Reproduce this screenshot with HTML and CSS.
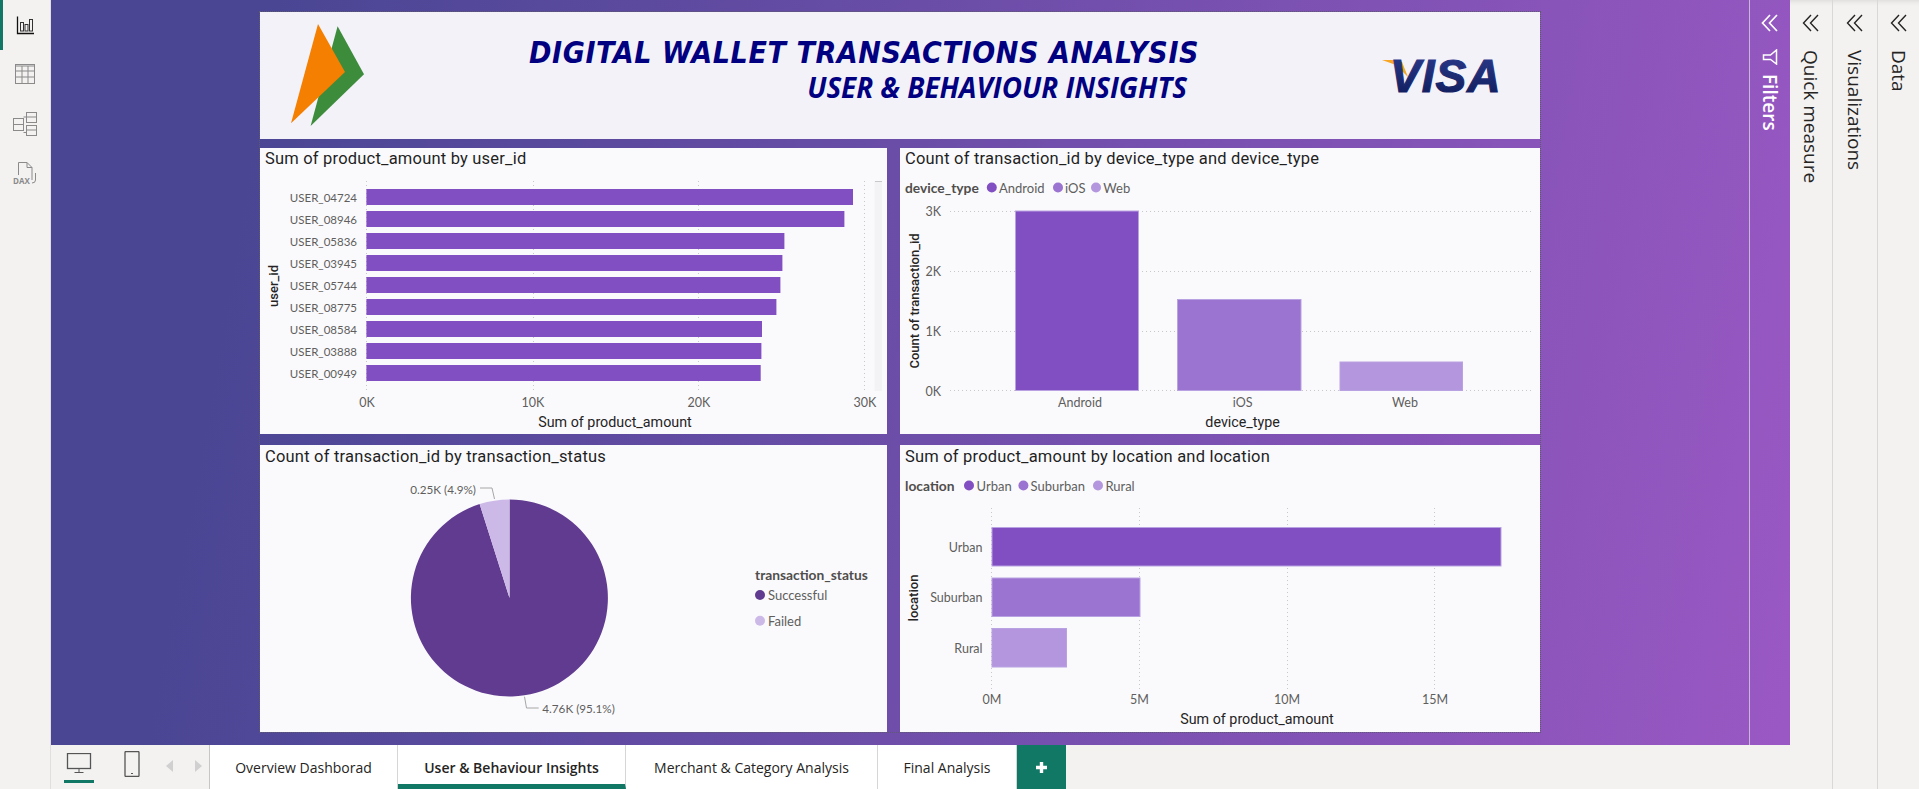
FILE: index.html
```html
<!DOCTYPE html>
<html lang="en">
<head>
    <meta charset="UTF-8">
    <title>Digital Wallet Transactions Analysis</title>
    <link rel="stylesheet" href="styles.css">
</head>
<body>
    <div class="app">
        <nav class="rail">
            <div class="railItem active">
                <svg width="24" height="24" viewBox="0 0 24 24" fill="none" stroke="#333"><path d="M4.500 3.500V20.500H21" stroke="#111" stroke-width="1.300"/><rect x="7.500" y="9.500" width="3" height="8.500"/><rect x="12" y="11.500" width="3" height="6.500"/><rect x="16.500" y="6.500" width="3" height="11.500"/></svg>
            </div>
            <div class="railItem">
                <svg width="24" height="24" viewBox="0 0 24 24" fill="none" stroke="#8a8a8a"><rect x="2.500" y="2.500" width="19" height="19"/><path d="M2.500 4H21.500M2.500 9H21.500M2.500 15H21.500M9 4V21.500M15 4V21.500"/></svg>
            </div>
            <div class="railItem">
                <svg width="24" height="24" viewBox="0 0 24 24" fill="none" stroke="#8a8a8a"><rect x="0.500" y="6.500" width="10" height="12"/><path d="M0.500 12.500H10.500"/><rect x="13.500" y="0.500" width="10" height="10"/><path d="M13.500 5H23.500"/><rect x="13.500" y="13.500" width="10" height="10"/><path d="M13.500 18H23.500M10.500 5H13.500M10.500 20.500H13.500"/></svg>
            </div>
            <div class="railItem">
                <svg width="24" height="24" viewBox="0 0 24 24" fill="none" stroke="#8a8a8a"><path d="M5.500 14V1.500H14L19 6.500V19"/><path d="M14 1.500V6.500H19"/><path d="M22.500 12V19Q22.500 22 19 22"/><text class="daxText" x="0" y="22.500">DAX</text></svg>
            </div>
        </nav>

        <main class="canvas">
            <div class="page">
                <header class="banner">
                    <svg class="logo" width="73" height="102" viewBox="0 0 73 102">
                        <polygon points="46.600,2.300 73,50.300 19.600,102" fill="#3c8c3c"/>
                        <polygon points="27,0 54,48 0,99.300" fill="#f57f00"/>
                    </svg>
                    <div class="bannerTitles">
                        <div class="titleMain">DIGITAL WALLET TRANSACTIONS ANALYSIS</div>
                        <div class="titleSub">USER &amp; BEHAVIOUR INSIGHTS</div>
                    </div>
                    <svg class="visa" width="124" height="38" viewBox="0 0 124 38">
                        <defs>
                            <linearGradient id="visaFill" x1="0" y1="0" x2="0" y2="1">
                                <stop offset="0" stop-color="#2c3b8e"/>
                                <stop offset="1" stop-color="#0d1a58"/>
                            </linearGradient>
                        </defs>
                        <polygon points="0,3 16,3 20,5 26,20 14,8" fill="#f6a623"/>
                        <text class="visaText" x="8" y="35" fill="url(#visaFill)" stroke="url(#visaFill)">VISA</text>
                    </svg>
                </header>

                <div class="grid">
                    <section class="card">
                        <h2>Sum of product_amount by user_id</h2>
                        <svg class="chart" width="627" height="264" viewBox="0 0 627 264">
                            <g class="gridline">
                                <line x1="106.500" y1="11" x2="106.500" y2="222"/>
                                <line x1="273.500" y1="11" x2="273.500" y2="222"/>
                                <line x1="438.500" y1="11" x2="438.500" y2="222"/>
                                <line x1="604.500" y1="11" x2="604.500" y2="222"/>
                            </g>
                            <rect x="614.600" y="11" width="7.400" height="210" fill="#f3f3f5"/>
                            <rect x="615" y="11" width="7" height="1" fill="#c8c8c8"/>
                            <g fill="#824fc2">
                                <rect x="106.400" y="19" width="486.600" height="16"/>
                                <rect x="106.400" y="41" width="478" height="16"/>
                                <rect x="106.400" y="63" width="418" height="16"/>
                                <rect x="106.400" y="85" width="416" height="16"/>
                                <rect x="106.400" y="107" width="414" height="16"/>
                                <rect x="106.400" y="129" width="410" height="16"/>
                                <rect x="106.400" y="151" width="395.600" height="16"/>
                                <rect x="106.400" y="173" width="395" height="16"/>
                                <rect x="106.400" y="195" width="394.300" height="16"/>
                            </g>
                            <g class="tick end users">
                                <text x="97" y="31.500">USER_04724</text>
                                <text x="97" y="53.500">USER_08946</text>
                                <text x="97" y="75.500">USER_05836</text>
                                <text x="97" y="97.500">USER_03945</text>
                                <text x="97" y="119.500">USER_05744</text>
                                <text x="97" y="141.500">USER_08775</text>
                                <text x="97" y="163.500">USER_08584</text>
                                <text x="97" y="185.500">USER_03888</text>
                                <text x="97" y="207.500">USER_00949</text>
                            </g>
                            <g class="tick middle">
                                <text x="107" y="237">0K</text>
                                <text x="273" y="237">10K</text>
                                <text x="439" y="237">20K</text>
                                <text x="605" y="237">30K</text>
                            </g>
                            <text class="axisTitle" x="355" y="257">Sum of product_amount</text>
                            <text class="axisTitle side" transform="translate(18 116) rotate(-90)">user_id</text>
                        </svg>
                    </section>

                    <section class="card">
                        <h2>Count of transaction_id by device_type and device_type</h2>
                        <svg class="chart" width="640" height="264" viewBox="0 0 640 264">
                            <g class="legend">
                                <text class="legendTitle" x="5" y="22.500">device_type</text>
                                <circle cx="91.800" cy="17.500" r="5" fill="#824fc2"/>
                                <text x="99" y="22.500">Android</text>
                                <circle cx="158" cy="17.500" r="5" fill="#9b73d1"/>
                                <text x="165" y="22.500">iOS</text>
                                <circle cx="196" cy="17.500" r="5" fill="#b396dd"/>
                                <text x="203.300" y="22.500">Web</text>
                            </g>
                            <g class="gridline">
                                <line x1="50" y1="41.500" x2="631" y2="41.500"/>
                                <line x1="50" y1="101.500" x2="631" y2="101.500"/>
                                <line x1="50" y1="161.500" x2="631" y2="161.500"/>
                                <line x1="50" y1="220.500" x2="631" y2="220.500"/>
                            </g>
                            <rect class="barEdge" x="115.500" y="41" width="123" height="179.500" fill="#824fc2"/>
                            <rect class="barEdge" x="277.500" y="129.500" width="123.500" height="91" fill="#9b73d1"/>
                            <rect class="barEdge" x="440" y="192" width="122.500" height="28.500" fill="#b396dd"/>
                            <g class="tick end">
                                <text x="41" y="46">3K</text>
                                <text x="41" y="106">2K</text>
                                <text x="41" y="166">1K</text>
                                <text x="41" y="226">0K</text>
                            </g>
                            <g class="tick middle">
                                <text x="180" y="237">Android</text>
                                <text x="342.600" y="237">iOS</text>
                                <text x="505" y="237">Web</text>
                            </g>
                            <text class="axisTitle" x="342.600" y="257">device_type</text>
                            <text class="axisTitle side" transform="translate(19 131) rotate(-90)">Count of transaction_id</text>
                        </svg>
                    </section>

                    <section class="card">
                        <h2>Count of transaction_id by transaction_status</h2>
                        <svg class="chart" width="627" height="265" viewBox="0 0 627 265">
                            <path d="M249.500 131 L249.500 32.500 A98.500 98.500 0 1 1 219.650 37.100 Z" fill="#613b8f"/>
                            <path d="M249.500 131 L219.650 37.100 A98.500 98.500 0 0 1 249.500 32.500 Z" fill="#cdb9e8"/>
                            <polyline class="leader" points="220,21 232,21 234.500,32"/>
                            <polyline class="leader" points="264.500,229.700 266.500,241 278.700,241"/>
                            <g class="tick pieLabels">
                                <text class="end" x="216" y="27">0.25K (4.9%)</text>
                                <text x="282.300" y="246">4.76K (95.1%)</text>
                            </g>
                            <g class="legend">
                                <text class="legendTitle" x="495" y="112.500">transaction_status</text>
                                <circle cx="500" cy="128" r="5" fill="#613b8f"/>
                                <text x="508" y="133">Successful</text>
                                <circle cx="500" cy="153.700" r="5" fill="#cdb9e8"/>
                                <text x="508" y="159">Failed</text>
                            </g>
                        </svg>
                    </section>

                    <section class="card">
                        <h2>Sum of product_amount by location and location</h2>
                        <svg class="chart" width="640" height="265" viewBox="0 0 640 265">
                            <g class="legend">
                                <text class="legendTitle" x="5" y="23.500">location</text>
                                <circle cx="69" cy="18.500" r="5" fill="#824fc2"/>
                                <text x="76.600" y="23.500">Urban</text>
                                <circle cx="123.400" cy="18.500" r="5" fill="#9b73d1"/>
                                <text x="130.500" y="23.500">Suburban</text>
                                <circle cx="198" cy="18.500" r="5" fill="#b396dd"/>
                                <text x="205.400" y="23.500">Rural</text>
                            </g>
                            <g class="gridline">
                                <line x1="91.500" y1="41" x2="91.500" y2="223"/>
                                <line x1="239.500" y1="41" x2="239.500" y2="223"/>
                                <line x1="387.500" y1="41" x2="387.500" y2="223"/>
                                <line x1="534.500" y1="41" x2="534.500" y2="223"/>
                            </g>
                            <rect class="barEdge" x="92" y="60.500" width="509" height="38.500" fill="#824fc2"/>
                            <rect class="barEdge" x="92" y="111" width="148" height="38.500" fill="#9b73d1"/>
                            <rect class="barEdge" x="92" y="161.500" width="74.500" height="38.500" fill="#b396dd"/>
                            <g class="tick end">
                                <text x="82.500" y="85">Urban</text>
                                <text x="82.500" y="135">Suburban</text>
                                <text x="82.500" y="186">Rural</text>
                            </g>
                            <g class="tick middle">
                                <text x="92" y="237">0M</text>
                                <text x="239.500" y="237">5M</text>
                                <text x="387" y="237">10M</text>
                                <text x="535" y="237">15M</text>
                            </g>
                            <text class="axisTitle" x="357" y="257">Sum of product_amount</text>
                            <text class="axisTitle side" transform="translate(18 131) rotate(-90)">location</text>
                        </svg>
                    </section>
                </div>
            </div>

            <aside class="filterPane">
                <svg class="chevrons" width="18" height="18" viewBox="0 0 18 18" fill="none" stroke="#fff" stroke-width="1.700"><path d="M9 1L1.500 9L9 17M16 1L8.500 9L16 17"/></svg>
                <svg class="funnel" width="16" height="16" viewBox="0 0 16 16" fill="none" stroke="#fff" stroke-width="1.500"><path d="M14.500 1V15L8.500 10.500H1.500V6H8.500Z"/></svg>
                <div class="vertical bold">Filters</div>
            </aside>
        </main>

        <aside class="panes">
            <div class="pane">
                <svg class="chevrons" width="18" height="18" viewBox="0 0 18 18" fill="none" stroke="#252423" stroke-width="1.400"><path d="M9 1L1.500 9L9 17M16 1L8.500 9L16 17"/></svg>
                <div class="vertical">Quick measure</div>
            </div>
            <div class="pane">
                <svg class="chevrons" width="18" height="18" viewBox="0 0 18 18" fill="none" stroke="#252423" stroke-width="1.400"><path d="M9 1L1.500 9L9 17M16 1L8.500 9L16 17"/></svg>
                <div class="vertical">Visualizations</div>
            </div>
            <div class="pane">
                <svg class="chevrons" width="18" height="18" viewBox="0 0 18 18" fill="none" stroke="#252423" stroke-width="1.400"><path d="M9 1L1.500 9L9 17M16 1L8.500 9L16 17"/></svg>
                <div class="vertical">Data</div>
            </div>
        </aside>

        <footer class="tabBar">
            <div class="devices">
                <div class="device current">
                    <svg width="26" height="20" viewBox="0 0 26 20" fill="none" stroke="#555"><rect x="1.500" y="0.500" width="23" height="15" stroke-width="1.300"/><path d="M13 16V19M8.500 19.500H17.500"/></svg>
                </div>
                <div class="device">
                    <svg width="16" height="26" viewBox="0 0 16 26" fill="none" stroke="#555"><rect x="1" y="0.500" width="14" height="25" rx="1" stroke-width="1.300"/><path d="M7 22.500H9"/></svg>
                </div>
                <svg class="arrows" width="36" height="12" viewBox="0 0 36 12" fill="#d0d0d0"><polygon points="7,0 7,12 0,6"/><polygon points="29,0 29,12 36,6"/></svg>
            </div>
            <div class="tab">Overview Dashborad</div>
            <div class="tab active">User &amp; Behaviour Insights</div>
            <div class="tab">Merchant &amp; Category Analysis</div>
            <div class="tab">Final Analysis</div>
            <div class="addTab">
                <svg width="11" height="11" viewBox="0 0 13 13" fill="#fff"><path d="M4.500 0H8.500V4.500H13V8.500H8.500V13H4.500V8.500H0V4.500H4.500Z"/></svg>
            </div>
        </footer>
    </div>
</body>
</html>
```

FILE: styles.css
```css
* {
    box-sizing: border-box;
}

body {
    margin: 0;
    font-family: "Open Sans", sans-serif;
    color: #252423;
    background-color: #f3f2f1;
    overflow: hidden;
}

.app {
    display: grid;
    grid-template-columns: 51px 1fr 129px;
    grid-template-rows: 745px 44px;
    width: 1919px;
    height: 789px;
}

/* left rail */
.rail {
    grid-row: 1 / 3;
    background-color: #f3f2f1;
    border-right: 1px solid #e1dfdd;
}

.railItem {
    height: 49.5px;
    display: flex;
    align-items: center;
    justify-content: center;
}

.railItem.active {
    box-shadow: inset 3px 0 0 #117865;
}

.daxText {
    font-family: "Open Sans", sans-serif;
    font-size: 8px;
    font-weight: 700;
    fill: #8a8a8a;
    stroke: none;
}

/* report canvas */
.canvas {
    display: flex;
    align-items: flex-start;
    padding-top: 11px;
    background: linear-gradient(100deg, #4a4694 12%, #9a58c4 100%);
}

.page {
    width: 1282px;
    margin-left: 208px;
    border: 1px dotted #5c5a6c;
}

.banner {
    display: flex;
    align-items: flex-start;
    height: 127px;
    margin-bottom: 9px;
    padding: 12px 0 0 31px;
    background-color: #f3f2f9;
}

.logo {
    flex: none;
}

.bannerTitles {
    width: 668px;
    margin-left: 165px;
    padding-top: 12px;
    color: #000080;
    font-style: italic;
    font-weight: 700;
}

.titleMain {
    font-family: "DejaVu Sans", sans-serif;
    font-stretch: condensed;
    font-size: 30px;
    letter-spacing: 0.6px;
    line-height: 34px;
    white-space: nowrap;
}

.titleSub {
    font-family: "Open Sans", sans-serif;
    font-size: 27.8px;
    line-height: 34px;
    text-align: right;
    padding-right: 10px;
    white-space: nowrap;
}

.visa {
    flex: none;
    margin: 33px 0 0 185px;
}

.visaText {
    font-family: "Liberation Sans", sans-serif;
    font-size: 46px;
    font-style: italic;
    font-weight: 700;
    letter-spacing: 1px;
    stroke-width: 1.2;
}

.grid {
    display: grid;
    grid-template-columns: 627px 640px;
    grid-template-rows: 286px 287px;
    column-gap: 13px;
    row-gap: 11px;
}

.card {
    background-color: #fafafd;
}

.card h2 {
    margin: 0;
    height: 22px;
    padding-left: 5px;
    font-family: "Roboto", sans-serif;
    font-size: 16.5px;
    font-weight: 400;
    letter-spacing: 0.2px;
    line-height: 21px;
    color: #1f1f1f;
    white-space: nowrap;
}

.card:nth-child(n+3) h2 {
    padding-top: 1px;
}

.chart {
    display: block;
}

.gridline line {
    stroke: #c8c8c8;
    stroke-dasharray: 1 3;
}

.barEdge {
    stroke: #b9a2e2;
}

.tick text {
    font-family: "Lato", sans-serif;
    font-size: 12.5px;
    fill: #605e5c;
}

.legend text {
    font-family: "Lato", sans-serif;
    font-size: 13px;
    fill: #605e5c;
}

.tick.users text {
    font-size: 11.5px;
}

.tick.pieLabels text {
    font-size: 11.7px;
}

.tick.end text,
.tick .end {
    text-anchor: end;
}

.tick.middle text {
    text-anchor: middle;
}

.axisTitle {
    font-family: "Roboto", sans-serif;
    font-size: 14.3px;
    fill: #252423;
    text-anchor: middle;
}

.axisTitle.side {
    font-size: 13px;
    font-weight: 500;
}

.legend .legendTitle {
    font-size: 13.8px;
    font-weight: 700;
    fill: #504e4c;
}

.leader {
    fill: none;
    stroke: #a6a6a6;
}

/* right panes */
.vertical {
    writing-mode: vertical-rl;
    font-size: 19px;
    white-space: nowrap;
}

.vertical.bold {
    font-weight: 600;
}

.filterPane {
    width: 41px;
    height: 745px;
    margin: -11px 0 0 auto;
    display: flex;
    flex-direction: column;
    align-items: center;
    padding-top: 14px;
    color: #fff;
    border-left: 1px solid #c9b6d9;
}

.funnel {
    margin: 17px 0 9px;
}

.panes {
    grid-column: 3;
    grid-row: 1 / 3;
    display: grid;
    grid-template-columns: 43px 45px 41px;
    box-shadow: inset 0 6px 6px -6px rgba(0, 0, 0, 0.15);
}

.pane {
    display: flex;
    flex-direction: column;
    align-items: center;
    padding-top: 14px;
    border-right: 1px solid #d9d8d6;
}

.pane:last-child {
    border-right: none;
}

.pane .chevrons {
    margin-bottom: 18px;
}

/* page tabs */
.tabBar {
    grid-column: 2;
    display: grid;
    grid-template-columns: 159px 188px 228px 252px 139px 49px;
    background-color: #f3f2f1;
    font-size: 14px;
}

.devices {
    display: flex;
    align-items: flex-start;
    padding-left: 13px;
    border-right: 1px solid #c8c6c4;
}

.device {
    width: 30px;
    height: 38px;
    margin-right: 30px;
    display: flex;
    align-items: flex-start;
    justify-content: center;
    padding-top: 8px;
}

.device:nth-child(2) {
    width: 16px;
    margin-right: 26px;
    padding-top: 6px;
}

.device.current {
    border-bottom: 3px solid #117865;
}

.arrows {
    margin-top: 15px;
}

.tab {
    display: flex;
    align-items: center;
    justify-content: center;
    background-color: #fff;
    border-right: 1px solid #d6d6d6;
    white-space: nowrap;
}

.tab.active {
    font-weight: 600;
    border-bottom: 5px solid #117865;
    padding-top: 5px;
}

.addTab {
    display: flex;
    align-items: center;
    justify-content: center;
    background-color: #117865;
}
```
